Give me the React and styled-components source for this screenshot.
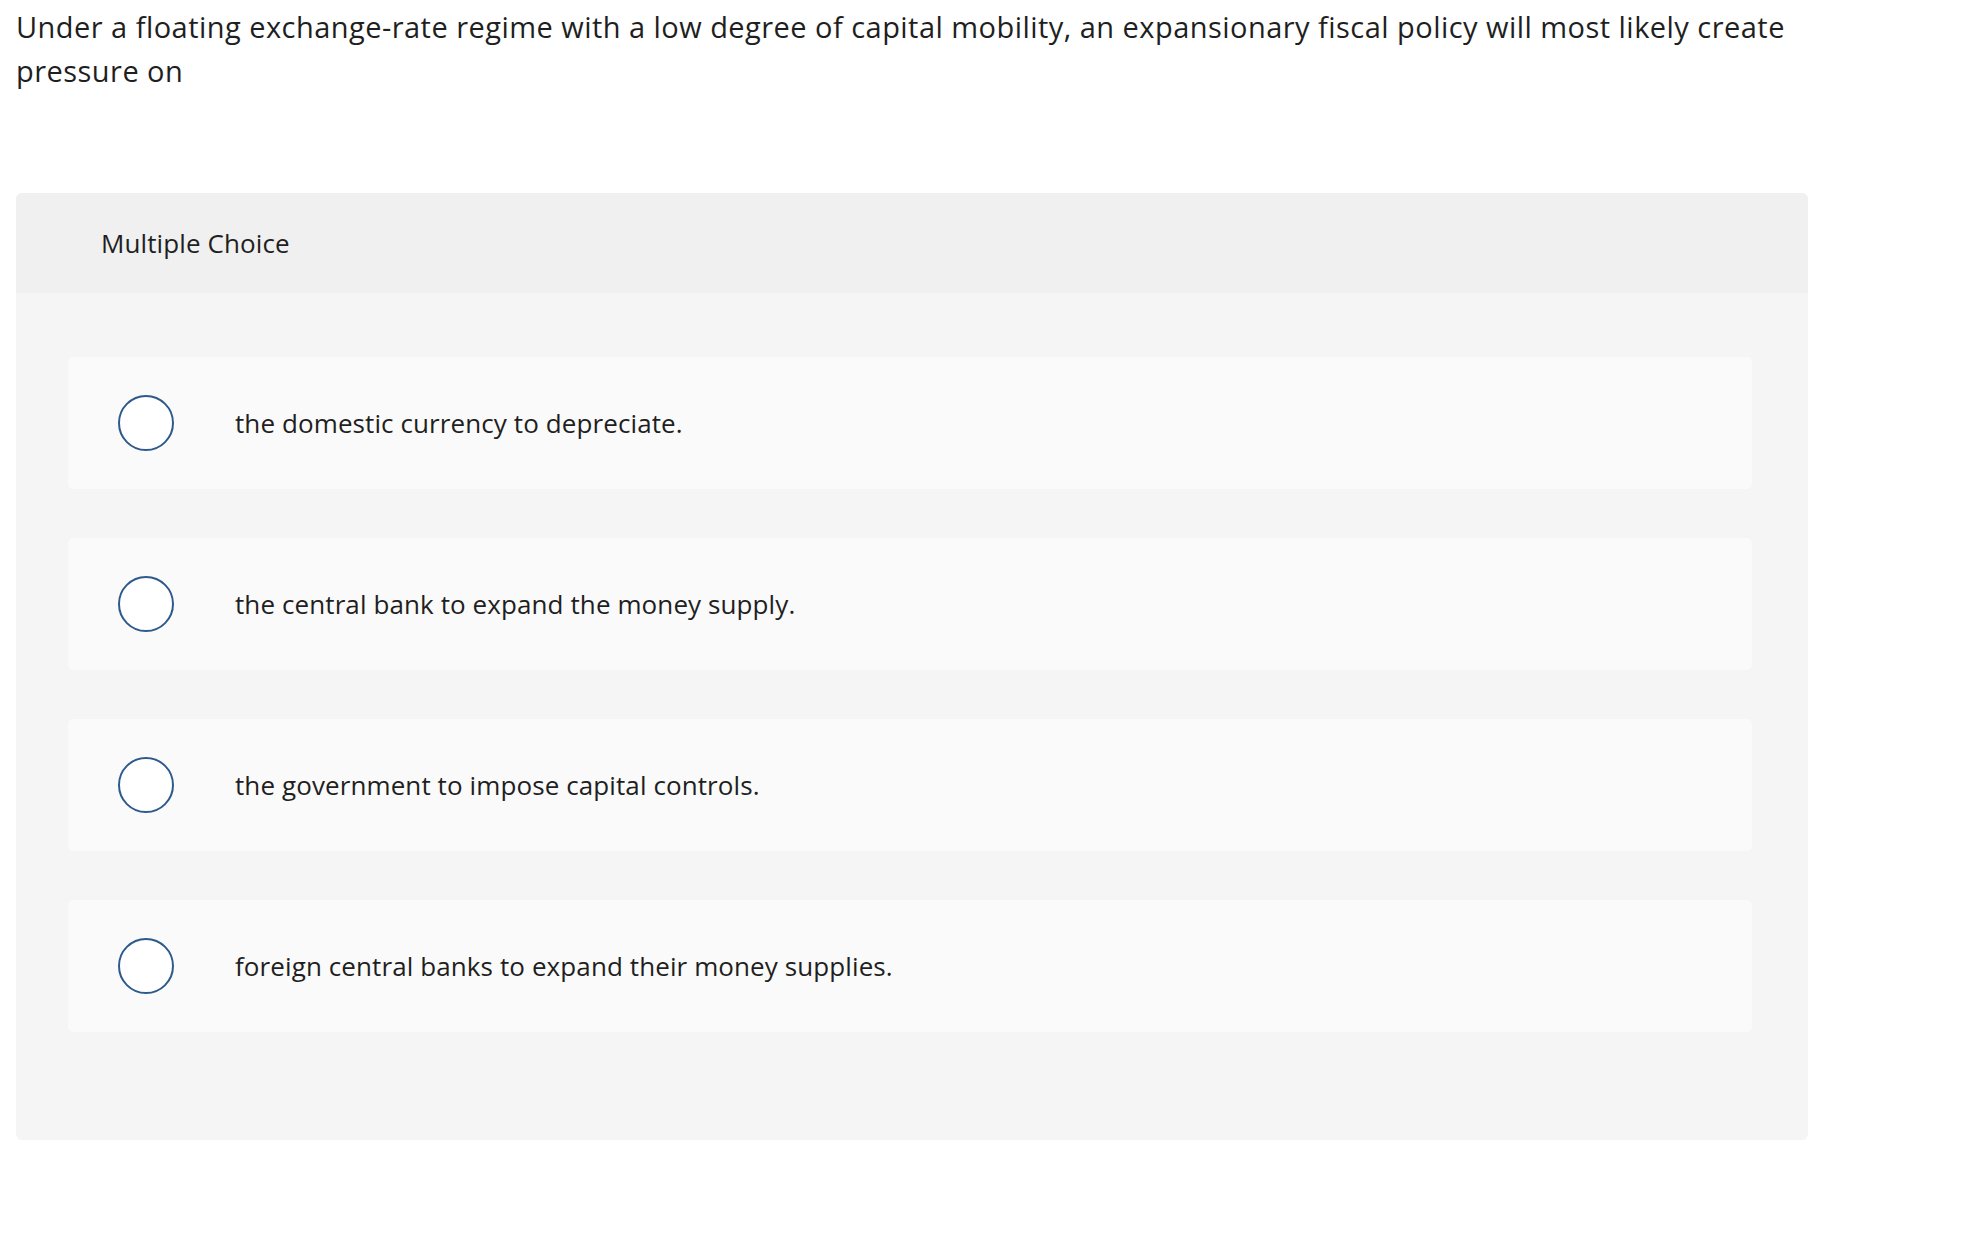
import React from "react";
import styled, { createGlobalStyle } from "styled-components";

const Global = createGlobalStyle`
  html, body { margin: 0; padding: 0; background: #ffffff; }
  body { font-family: "Open Sans", "Lato", "Liberation Sans", sans-serif; color: #1f1f1f; }
`;

const Page = styled.div`
  width: 1792px;
  padding: 5px 0 0 16px;
`;

const Question = styled.p`
  width: 1815px;
  margin: 0 0 100px 0;
  font-size: 29px;
  letter-spacing: 0.46px;
  line-height: 44px;
  color: #1f1f1f;
`;

const Panel = styled.section`
  background: #f5f5f5;
  border-radius: 6px;
  overflow: hidden;
`;

const PanelHeader = styled.div`
  height: 100px;
  background: #f0f0f0;
  display: flex;
  align-items: center;
  padding-left: 85px;
  font-size: 26px;
  letter-spacing: 0.1px;
  color: #1f1f1f;
`;

const Choices = styled.div`
  display: flex;
  flex-direction: column;
  gap: 49px;
  padding: 64px 56px 108px 52px;
`;

const Choice = styled.label`
  height: 132px;
  background: #fafafa;
  border-radius: 5px;
  display: flex;
  align-items: center;
  padding-left: 50px;
  cursor: pointer;
`;

const Radio = styled.span`
  width: 52px;
  height: 52px;
  border: 2px solid #2d5a8c;
  border-radius: 50%;
  background: #ffffff;
  flex-shrink: 0;
`;

const ChoiceText = styled.span`
  margin-left: 61px;
  font-size: 26px;
  letter-spacing: 0.1px;
  color: #1f1f1f;
`;

const options = [
  "the domestic currency to depreciate.",
  "the central bank to expand the money supply.",
  "the government to impose capital controls.",
  "foreign central banks to expand their money supplies.",
];

export default function App() {
  return (
    <>
      <Global />
      <Page>
        <Question>
          Under a floating exchange-rate regime with a low degree of capital mobility, an
          expansionary fiscal policy will most likely create pressure on
        </Question>
        <Panel>
          <PanelHeader>Multiple Choice</PanelHeader>
          <Choices>
            {options.map((o) => (
              <Choice key={o}>
                <Radio />
                <ChoiceText>{o}</ChoiceText>
              </Choice>
            ))}
          </Choices>
        </Panel>
      </Page>
    </>
  );
}
